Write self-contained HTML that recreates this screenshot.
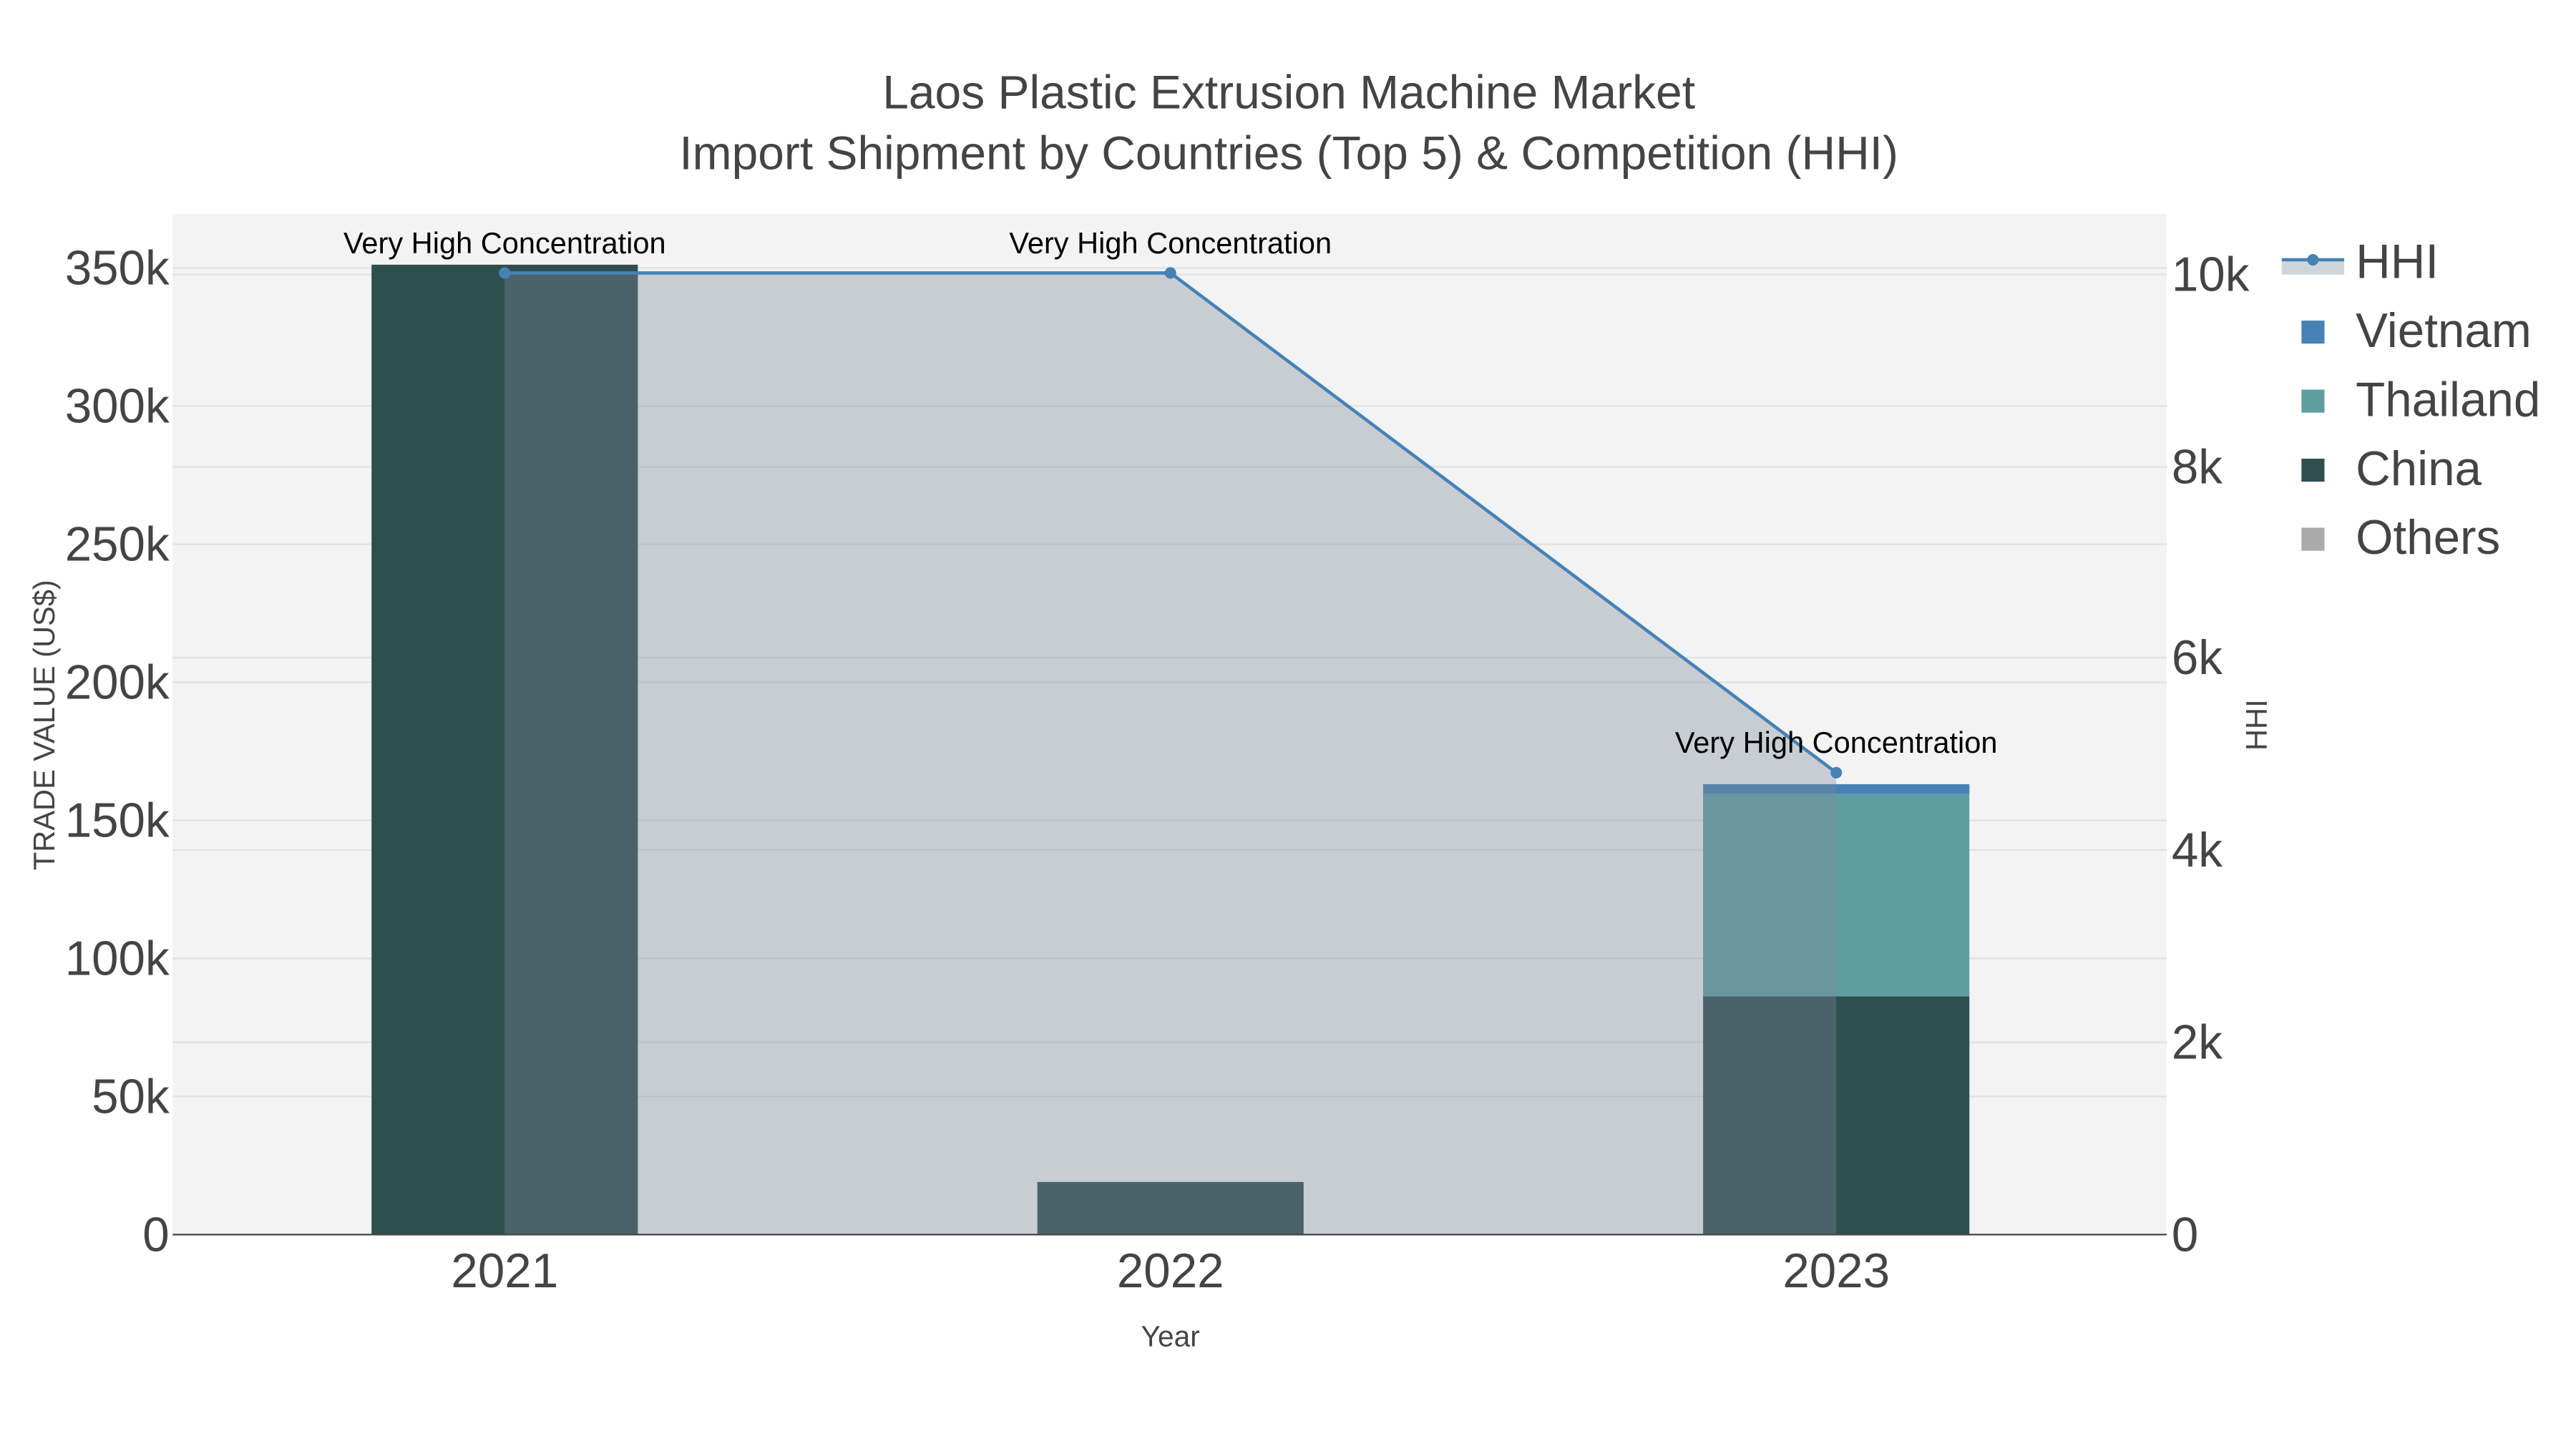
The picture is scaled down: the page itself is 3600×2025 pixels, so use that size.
<!DOCTYPE html>
<html><head><meta charset="utf-8"><style>html,body{margin:0;padding:0;background:#fff}svg{display:block}</style></head>
<body>
<svg width="3600" height="2025" viewBox="0 0 1567 881.4" xmlns="http://www.w3.org/2000/svg" font-family="Liberation Sans, sans-serif">
<rect x="0" y="0" width="1567" height="881.4" fill="#fff"/>
<rect x="105" y="130" width="1213" height="621" fill="#f3f3f3"/>
<g stroke="#e2e2e2" stroke-width="1">
<line x1="105" x2="1318" y1="163" y2="163"/><line x1="105" x2="1318" y1="247" y2="247"/>
<line x1="105" x2="1318" y1="331" y2="331"/><line x1="105" x2="1318" y1="415" y2="415"/>
<line x1="105" x2="1318" y1="499" y2="499"/><line x1="105" x2="1318" y1="583" y2="583"/>
<line x1="105" x2="1318" y1="667" y2="667"/>
<line x1="105" x2="1318" y1="167" y2="167"/><line x1="105" x2="1318" y1="284" y2="284"/>
<line x1="105" x2="1318" y1="400" y2="400"/><line x1="105" x2="1318" y1="517" y2="517"/>
<line x1="105" x2="1318" y1="634" y2="634"/>
</g>
<rect x="226" y="161" width="162" height="590" fill="#2f4f4f"/>
<rect x="631" y="719" width="162" height="32" fill="#2f4f4f"/>
<rect x="1036" y="606" width="162" height="145" fill="#2f4f4f"/>
<rect x="1036" y="483" width="162" height="123" fill="#5f9ea0"/>
<rect x="1036" y="477" width="162" height="6" fill="#4682b4"/>
<polygon points="307,166 712,166 1117,470 1117,751 307,751" fill="rgb(123,137,156)" fill-opacity="0.357"/>
<line x1="105" x2="1318" y1="751" y2="751" stroke="#444" stroke-width="1"/>
<polyline points="307,166 712,166 1117,470" fill="none" stroke="#4682b4" stroke-width="2"/>
<g fill="#4682b4"><circle cx="307" cy="166" r="3.5"/><circle cx="712" cy="166" r="3.5"/><circle cx="1117" cy="470" r="3.5"/></g>
<g font-size="18.1" fill="#000" text-anchor="middle">
<text x="307" y="154">Very High Concentration</text>
<text x="712" y="154">Very High Concentration</text>
<text x="1117" y="458">Very High Concentration</text>
</g>
<g font-size="28.7" fill="#444" text-anchor="middle">
<text x="784" y="66">Laos Plastic Extrusion Machine Market</text>
<text x="784" y="103">Import Shipment by Countries (Top 5) &amp; Competition (HHI)</text>
</g>
<g font-size="29.3" fill="#444" text-anchor="end">
<text x="103" y="173">350k</text><text x="103" y="257">300k</text><text x="103" y="341">250k</text>
<text x="103" y="425">200k</text><text x="103" y="509">150k</text><text x="103" y="593">100k</text>
<text x="103" y="677">50k</text><text x="103" y="761">0</text>
</g>
<g font-size="29.3" fill="#444">
<text x="1321" y="177">10k</text><text x="1321" y="294">8k</text><text x="1321" y="410">6k</text>
<text x="1321" y="527">4k</text><text x="1321" y="644">2k</text><text x="1321" y="761">0</text>
</g>
<g font-size="29.3" fill="#444" text-anchor="middle">
<text x="307" y="783">2021</text><text x="712" y="783">2022</text><text x="1117" y="783">2023</text>
</g>
<text x="712" y="819" font-size="17.7" fill="#444" text-anchor="middle">Year</text>
<text transform="translate(33,441) rotate(-90)" font-size="18.1" fill="#444" text-anchor="middle">TRADE VALUE (US$)</text>
<text transform="translate(1379,441) rotate(-90)" font-size="18.1" fill="#444" text-anchor="middle">HHI</text>
<g font-size="29.3" fill="#444">
<rect x="1388" y="159" width="38" height="8" fill="rgb(123,137,156)" fill-opacity="0.357"/>
<line x1="1388" x2="1426" y1="158" y2="158" stroke="#4682b4" stroke-width="2"/>
<circle cx="1407" cy="158" r="3.5" fill="#4682b4"/>
<text x="1433" y="169">HHI</text>
<rect x="1400" y="195" width="14" height="14" fill="#4682b4"/><text x="1433" y="211">Vietnam</text>
<rect x="1400" y="237" width="14" height="14" fill="#5f9ea0"/><text x="1433" y="253">Thailand</text>
<rect x="1400" y="279" width="14" height="14" fill="#2f4f4f"/><text x="1433" y="295">China</text>
<rect x="1400" y="321" width="14" height="14" fill="#aaaaaa"/><text x="1433" y="337">Others</text>
</g>
</svg>
</body></html>
